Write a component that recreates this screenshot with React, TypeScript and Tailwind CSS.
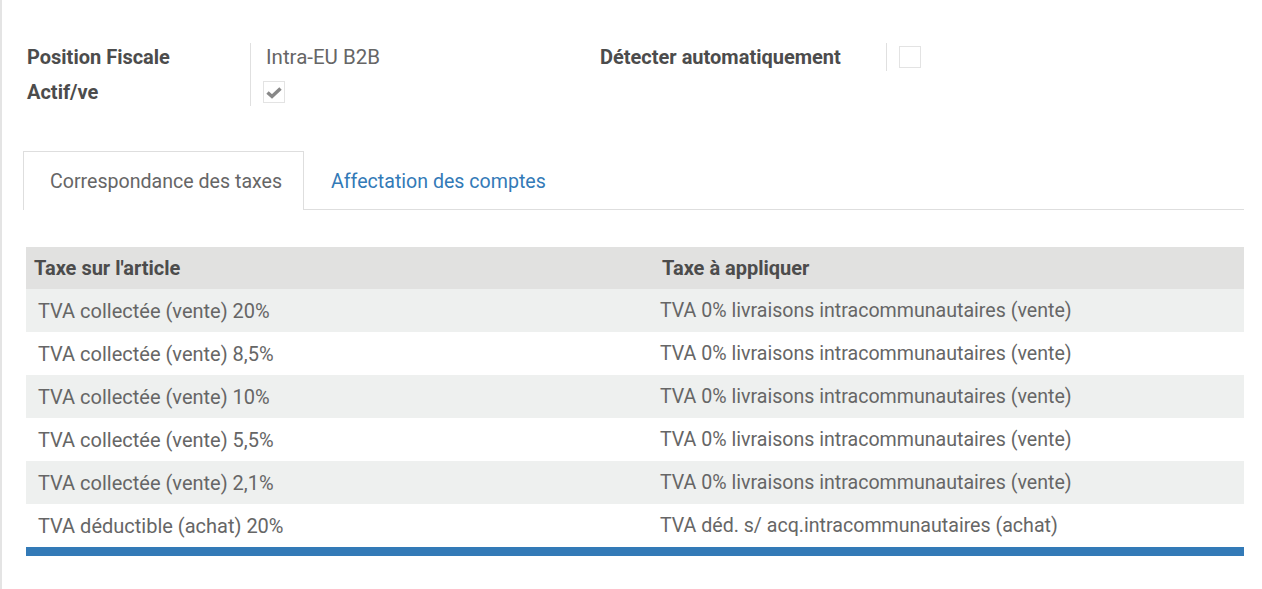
const rows = [
  { src: 'TVA collectée (vente) 20%', dst: 'TVA 0% livraisons intracommunautaires (vente)' },
  { src: 'TVA collectée (vente) 8,5%', dst: 'TVA 0% livraisons intracommunautaires (vente)' },
  { src: 'TVA collectée (vente) 10%', dst: 'TVA 0% livraisons intracommunautaires (vente)' },
  { src: 'TVA collectée (vente) 5,5%', dst: 'TVA 0% livraisons intracommunautaires (vente)' },
  { src: 'TVA collectée (vente) 2,1%', dst: 'TVA 0% livraisons intracommunautaires (vente)' },
  { src: 'TVA déductible (achat) 20%', dst: 'TVA déd. s/ acq.intracommunautaires (achat)' },
];

function Checkbox({ checked }: { checked?: boolean }) {
  return (
    <div className="w-[22px] h-[22px] border border-[#e3e3e3] bg-white flex items-center justify-center">
      {checked && (
        <svg width="16" height="13" viewBox="0 0 16 13" className="shrink-0">
          <path d="M1.5 6.5 L6 10.5 L14.5 2.5" fill="none" stroke="#888888" strokeWidth="3.5" />
        </svg>
      )}
    </div>
  );
}

export default function App() {
  return (
    <div
      className="w-[1262px] h-[589px] bg-white border-l-2 border-[#e4e4e4] overflow-hidden text-[19.6px] text-[#666666]"
      style={{ fontFamily: 'Roboto, "Noto Sans", sans-serif' }}
    >
      {/* header fields */}
      <div className="flex pt-[43px] pl-[25px]">
        <div className="flex w-[573px]">
          <div className="w-[223px] flex flex-col gap-[7px] font-bold text-[20px] text-[#4c4c4c]">
            <div className="h-[28px] flex items-center">Position Fiscale</div>
            <div className="h-[28px] flex items-center">Actif/ve</div>
          </div>
          <div className="border-l border-[#e0e0e0] pl-[15px] flex flex-col gap-[7px]">
            <div className="h-[28px] flex items-center text-[20.5px]">Intra-EU B2B</div>
            <div className="h-[28px] flex items-center -ml-[3px]">
              <Checkbox checked />
            </div>
          </div>
        </div>
        <div className="flex h-[28px]">
          <div className="w-[286px] flex items-center font-bold text-[20px] text-[#4c4c4c]">Détecter automatiquement</div>
          <div className="border-l border-[#e0e0e0] pl-[12px] flex items-center">
            <Checkbox />
          </div>
        </div>
      </div>

      {/* tabs */}
      <div className="mt-[45px] ml-[21px] w-[1221px] flex border-b border-[#dedede]">
        <div className="w-[281px] h-[59px] -mb-px bg-white border border-b-0 border-[#dedede] flex items-center pl-[26px] pt-[1px]">
          Correspondance des taxes
        </div>
        <div className="h-[59px] -mb-px flex items-center pl-[27px] pt-[2px] text-[#337ab7]">Affectation des comptes</div>
      </div>

      {/* table */}
      <div className="mt-[37px] ml-[24px] w-[1218px]">
        <div className="grid grid-cols-[628px_1fr] h-[42px] items-center bg-[#e1e1e0] font-bold text-[20px] text-[#4c4c4c]">
          <div className="pl-[8px]">Taxe sur l'article</div>
          <div className="pl-[8px]">Taxe à appliquer</div>
        </div>
        {rows.map((r, i) => (
          <div
            key={i}
            className={`grid grid-cols-[628px_1fr] h-[43px] items-center ${i % 2 === 0 ? 'bg-[#eef0ef]' : 'bg-white'}`}
          >
            <div className="pl-[12px] text-[20px]">{r.src}</div>
            <div className="pl-[6px]">{r.dst}</div>
          </div>
        ))}
        <div className="h-[9px] bg-[#337ab7]" />
      </div>
    </div>
  );
}
